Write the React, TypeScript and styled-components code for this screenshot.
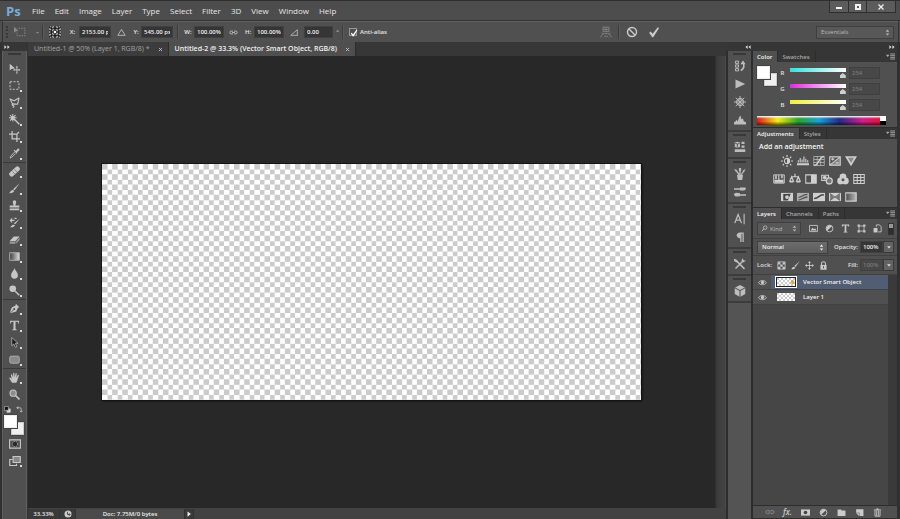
import React from "react";
import styled, { createGlobalStyle, css } from "styled-components";

const Global = createGlobalStyle`
  * { box-sizing: border-box; }
  body {
    margin: 0;
    background: #4f4f4f;
    color: #dedede;
    font: 7px/10px "Open Sans", "Noto Sans", sans-serif;
  }
  button, input, select { font: inherit; color: inherit; margin: 0; padding: 0; border: 0; background: none; border-radius: 0; }
  button { display: inline-flex; align-items: center; justify-content: center; }
  svg { display: block; flex: none; }
`;

/* ---------- icons ---------- */

const Svg = styled.svg<{ $size?: number }>`
  width: ${(p) => p.$size ?? 12}px;
  height: ${(p) => p.$size ?? 12}px;
  fill: currentColor;
  stroke: none;
`;

const line = { fill: "none", stroke: "currentColor" } as const;

const glyphs: Record<string, React.ReactNode> = {
  move: (
    <>
      <path d="M1 1v10l3-2.6L9 8z" />
      <path {...line} strokeWidth="1.3" d="M11.500 5.500v9M7 10h9" />
      <path d="M11.500 4l1.500 2h-3zM11.500 16l1.500-2h-3zM6 10l2-1.500v3zM16 10l-2-1.500v3z" />
    </>
  ),
  marquee: <path {...line} strokeWidth="1.4" strokeDasharray="3 2" d="M1.500 2.500h13v11h-13z" />,
  lasso: (
    <path {...line} strokeWidth="1.6" strokeLinejoin="round" d="M5 10L1.500 3l6 2.500L14.500 1.500l-2 9-6.500-.5c-2 0-2 2.500 0 2.500s1.500 2-.5 2.700" />
  ),
  wand: (
    <>
      <path {...line} strokeWidth="2" d="M7 7l8 8" />
      <circle cx="5.500" cy="5.500" r="2.600" />
      <path {...line} strokeWidth="1.5" d="M5.500 0v11M0 5.500h11M1.500 1.500l8 8M9.500 1.500l-8 8" />
    </>
  ),
  crop: <path {...line} strokeWidth="1.8" d="M4.500 0v11.500H16M0 4.500h11.500V16M14.500 1.500l-3 3" />,
  eyedropper: (
    <>
      <path d="M10 4.500l2.500-3.300c1.500-1.200 3.500.6 2.300 2.300L11.500 6l.8 1-1.200 1.200-4.300-4.400L8 2.700z" />
      <path {...line} strokeWidth="1.3" d="M8 6l-5.500 6-1 2.500 2.500-1L9.500 8" />
    </>
  ),
  heal: (
    <>
      <rect x="-1" y="4.500" width="18" height="7" rx="3" transform="rotate(-43 8 8)" />
      <path stroke="#777" strokeWidth="1.200" d="M5 8l3.500 3.500M8 5l3.500 3.500" />
    </>
  ),
  brush: (
    <>
      <path d="M15.500.5L8 10.500 6 9z" />
      <path d="M7.500 11c0 3-3.500 4.200-7.500 3.800 2-1 2-3.800 4.500-4.600z" />
    </>
  ),
  stamp: <path d="M5.500 3a2.500 2.500 0 015 0c0 1.500-1 2.500-1 5H15v3H1V8h5.500c0-2.500-1-3.500-1-5zM1 12.500h14V15H1z" />,
  history: (
    <>
      <path d="M15.500 2.500L9 10.500 7 9zM8.500 11.500c0 2.500-3 3.800-7 3.300 2-1 2-3 4.300-3.600z" />
      <path {...line} strokeWidth="1.700" d="M2 5h6M4.500 2L2 5l2.500 3M8 2h3" />
    </>
  ),
  eraser: (
    <>
      <path d="M7 3.500h8.500L9.500 10H1z" />
      <path fill="#999" d="M1 11h8.500v3H1zM10.500 10.500l5-5.500v3.500l-5 5.500z" />
    </>
  ),
  gradient: (
    <>
      <defs>
        <linearGradient id="toolGradient"><stop stopColor="#3c3c3c" /><stop offset="1" stopColor="#ddd" /></linearGradient>
      </defs>
      <path fill="url(#toolGradient)" stroke="#bbb" strokeWidth="1.200" d="M1 2.500h14v11H1z" />
    </>
  ),
  blur: <path d="M8 0c1 4 5 6.500 5 10.500a5 5 0 01-10 0C3 6.500 7 4 8 0z" />,
  dodge: (
    <>
      <circle cx="5.500" cy="5.500" r="4.800" />
      <path {...line} strokeWidth="2.200" d="M9 9l6 6" />
    </>
  ),
  pen: (
    <>
      <path d="M10 1l5 5-2 1-2.500 5.500L2 15l-.8-.8L4 6.500 9.500 3.500z" />
      <path stroke="#444" strokeWidth="1.200" d="M2 14.500l5-5" />
      <circle cx="7.600" cy="8.600" r="1.400" fill="#444" />
    </>
  ),
  type: <path d="M1.500 1h13v4h-1c-.3-2-1-2.500-4-2.500v10c0 1.200.5 1.500 2 1.500v1h-7v-1c1.500 0 2-.3 2-1.500v-10c-3 0-3.700.5-4 2.500h-1z" />,
  path: <path fill="#1e1e1e" stroke="#c8c8c8" strokeWidth="1" d="M4 .8v12l3-2.600 2.200 5 2.200-1-2.200-5h4z" />,
  shape: <rect x="1" y="3" width="14" height="10.500" rx="2.500" fill="#8a8a8a" stroke="#c0c0c0" />,
  hand: (
    <path d="M4.500 15.500L.5 9.300c-.4-1.300 1-1.600 1.700-.8L4 10 2.700 4.300c-.1-1.300 1.400-1.500 1.700-.4L6 8V2c0-1.300 1.700-1.300 1.800 0l.4 5.800L9.600 2c.3-1.200 1.900-.8 1.700.5l-.7 5.800 2-3.600c.7-1.100 2.100-.4 1.600.9L12.500 11c-.5 2-.8 3.500-2 4.500z" />
  ),
  zoom: (
    <>
      <circle cx="6" cy="6" r="4.500" fill="#8c8c8c" stroke="currentColor" strokeWidth="1.600" />
      <path {...line} strokeWidth="2.400" d="M9.500 9.500l5.700 5.700" />
    </>
  ),
  defaults: (
    <>
      <path fill="#ddd" d="M6 6h9v9H6z" />
      <path fill="#111" stroke="#bbb" strokeWidth="1.500" d="M1 1h9v9H1z" />
    </>
  ),
  swap: <path {...line} strokeWidth="2" d="M5 1L2 4l3 3M2 4h6c3 0 4 1 4 4v5M9 11l3 3 3-3" />,
  mask: (
    <>
      <path {...line} strokeWidth="1.500" d="M.8 2.500h14.400v11H.8z" />
      <circle cx="8" cy="8" r="3.500" fill="#2a2a2a" stroke="currentColor" strokeDasharray="1.500 1" />
    </>
  ),
  screen: (
    <>
      <path {...line} strokeWidth="1.600" d="M4.500 6H1v8h9v-2.500" />
      <path fill="#888" stroke="currentColor" strokeWidth="1.600" d="M5.500 2h9.500v8H5.500z" />
    </>
  ),
  transform: (
    <>
      <path d="M0 1v8l2.500-2L6 6.500z" />
      <path {...line} strokeWidth="1.300" strokeDasharray="2 1.500" d="M6 3h8.500v10H4V9" />
    </>
  ),
  triangle: <path {...line} strokeWidth="1.500" d="M8 2.500L14.500 13h-13z" />,
  link: (
    <path {...line} strokeWidth="1.600" d="M7 5.500H4a2.500 2.500 0 000 5h3M9 5.500h3a2.500 2.500 0 010 5H9M5.500 8h5" />
  ),
  angle: <path {...line} strokeWidth="1.400" d="M14 13H1.500L13 3v10" />,
  warp: (
    <path {...line} strokeWidth="1.200" d="M4 1.500h8v6H4zM8 1.500v6M4 4.500h8M1 15c1-4 4-5 7-5s6 1 7 5M4 11l-2-2M12 11l2-2M5 15c1-2 5-2 6 0" />
  ),
  cancel: (
    <>
      <circle cx="8" cy="8" r="6" {...line} strokeWidth="1.900" />
      <path {...line} strokeWidth="1.900" d="M3.700 3.700l8.600 8.600" />
    </>
  ),
  check: <path d="M1.500 9l2-1.700 2.700 3L13 1.500l1.800 1L7 15H5.700z" />,
  panelHistory: (
    <>
      <path {...line} strokeWidth="1.300" d="M2 1.500h4v3H2zM2 6.500h4v3H2zM2 11.500h4v3H2z" />
      <path {...line} strokeWidth="2" d="M9 14c4-2 5-5 3.500-9" />
      <path d="M8.500 5.500L12 .5l3.500 5z" />
    </>
  ),
  play: <path d="M2 2l13 6-13 6z" />,
  wheel: (
    <>
      <circle cx="8" cy="8" r="4.500" {...line} strokeWidth="1.500" />
      <path {...line} strokeWidth="1.300" d="M8 0v16M0 8h16M2.300 2.300l11.400 11.400M13.700 2.300L2.300 13.700" />
    </>
  ),
  histogram: <path d="M0 14v-3l2-1 1-2.500 2 2L7 4l1.500-2L10 7l2-1 1 3.500 3 1.500v3z" />,
  properties: (
    <>
      <path d="M1 2l3.500-1L8 2v6L4.500 9 1 8zM10 1h4v3h-4zM10 6h4v3h-4zM1 11h14v3.500H1z" />
      <path stroke="#444" fill="none" d="M1.500 3l3 1 3-1M4.500 4v4.500" />
    </>
  ),
  brushes: (
    <>
      <path d="M4 9h8l-1 7H5z" />
      <path {...line} strokeWidth="1.700" d="M7 9L2.500 3M8 9V1.500M9.500 9l4-5.500" />
      <path d="M0 1l4.500 2-2 2zM6.500 0h3v4h-3zM15.500 1l-4 2.500 2 1.500z" />
    </>
  ),
  presets: <path d="M0 3h8v-1h5c2 0 3 .5 3 1s-1 3-3 3H8V5H0zM16 11H8v-1.500L3 9c-2 0-3 2-3 2.700S1 14 3 14l5-.5V13h8z" />,
  character: (
    <>
      <path {...line} strokeWidth="1.700" d="M1 13.500L5.500 2 10 13.500M2.500 9.500h6" />
      <path {...line} strokeWidth="1.500" d="M13.500 1v14" />
    </>
  ),
  paragraph: <path d="M13 2v12.500h-1.700V3.500H10v11H8.300V9.500C2 9.500 2 2 8 2z" />,
  toolPresets: (
    <>
      <path {...line} strokeWidth="2" d="M3 3.500l11 11M13 3L2 14" />
      <path d="M0 1l3 1 2 2-1.500 2L0 4zM11 0l-1 4 3 2 3-3-2.500.5L12 2z" />
    </>
  ),
  cube: (
    <>
      <path d="M8 0l7 3.500v8.500L8 16l-7-4V3.500z" />
      <path fill="none" stroke="#494949" strokeWidth="1.300" d="M1 3.700L8 7.500l7-3.800M8 7.500V16" />
    </>
  ),
  brightness: (
    <>
      <circle cx="8" cy="8" r="3.500" {...line} strokeWidth="1.400" />
      <path d="M8 4.500a3.500 3.500 0 010 7z" />
      <path {...line} strokeWidth="1.500" d="M8 0v2.500M8 13.500V16M0 8h2.500M13.500 8H16M2.300 2.300L4 4M12 12l1.700 1.700M13.700 2.300L12 4M4 12l-1.700 1.700" />
    </>
  ),
  levels: <path d="M0 11h16v2.500H0zM1 10V7h1.500v3zM3.500 10V4H5v6zM6 10V6h1.500v4zM8.500 10V2H10v8zM11 10V5h1.500v5zM13.500 10V7H15v3z" />,
  curves: (
    <>
      <path {...line} strokeWidth="1.200" d="M1 2h14v12H1zM1 6h14M1 10h14M5.700 2v12M10.300 2v12" opacity=".7" />
      <path {...line} strokeWidth="1.800" d="M1 14c8 0 6-12 14-12" />
    </>
  ),
  exposure: (
    <>
      <path {...line} strokeWidth="1.500" d="M1 2.500h14v11H1z" />
      <path d="M1 13.500l14-11v11z" opacity=".4" />
      <path {...line} strokeWidth="1.400" d="M3 5.500h4M5 3.700v3.600M9 10.500h4M1 13.500l14-11" />
    </>
  ),
  vibrance: (
    <>
      <path d="M0 1.500h16L8 15z" />
      <path fill="#888" d="M4 3.500h8L8 10.500z" />
    </>
  ),
  hue: (
    <>
      <path {...line} strokeWidth="1.300" d="M1 2.500h14v11H1z" />
      <path d="M3 3h2v5H3zM7 3h1.500v6H7zM11 3h2v4h-2zM2 9h12v4H2z" />
    </>
  ),
  balance: (
    <path {...line} strokeWidth="1.600" d="M8 1v4M3 5h10M3.500 5L1 11h5zM12.500 5L10 11h5zM1 12h5M10 12h5" />
  ),
  blackWhite: (
    <>
      <path {...line} strokeWidth="1.400" d="M1 2.500h14v11H1z" />
      <path d="M8 2.500h7v11H8z" />
    </>
  ),
  photoFilter: (
    <>
      <path {...line} strokeWidth="1.500" d="M1 3h9v7H1z" />
      <circle cx="5" cy="6" r="2.500" />
      <circle cx="11" cy="10.500" r="4" fill="#777" stroke="currentColor" strokeWidth="1.700" />
    </>
  ),
  mixer: (
    <>
      <circle cx="8" cy="5" r="4.500" />
      <circle cx="4.800" cy="10.500" r="4.500" />
      <circle cx="11.200" cy="10.500" r="4.500" />
      <circle cx="8" cy="9" r="2" fill="#555" />
    </>
  ),
  lookup: <path {...line} strokeWidth="1.400" d="M1 2h14v12H1zM1 6h14M1 10h14M5.700 2v12M10.300 2v12" />,
  invert: (
    <>
      <path d="M0 2.500h16v11H0z" />
      <path fill="#444" d="M3 4l10-.5-4 9H3z" />
      <circle cx="8" cy="8" r="2.500" />
    </>
  ),
  posterize: (
    <>
      <path d="M0 2.500h16v11H0z" opacity=".75" />
      <path stroke="#555" fill="none" strokeWidth="1.700" d="M2 8.500c4 0 5-4 12-4M2 12c4 0 6-4 12-4" />
    </>
  ),
  threshold: (
    <>
      <path d="M0 2.500h16v11H0z" />
      <path fill="#444" d="M1.500 9c5 0 6-5 13-5v2c-6 0-7 5-13 5z" />
    </>
  ),
  selective: (
    <>
      <path d="M0 2.500h16v11H0z" />
      <path fill="#777" d="M1.500 3.500L7 8l-5.500 4.500zM14.500 3.500L9 8l5.500 4.500z" />
      <path stroke="#555" d="M1 3l14 10M15 3L1 13" />
    </>
  ),
  gradientMap: (
    <>
      <defs>
        <linearGradient id="mapGradient"><stop stopColor="#4a4a4a" /><stop offset="1" stopColor="#bbb" /></linearGradient>
      </defs>
      <path fill="url(#mapGradient)" stroke="#ccc" strokeWidth="1.400" d="M1 2.500h14v11H1z" />
    </>
  ),
  search: (
    <>
      <circle cx="9.500" cy="6" r="4" {...line} strokeWidth="2" />
      <path {...line} strokeWidth="2.200" d="M6.500 9L2 14" />
    </>
  ),
  pixel: (
    <>
      <path {...line} strokeWidth="1.500" d="M1 2.500h14v11H1z" />
      <path d="M3 11.500l3-5 3 3 2-2 2.500 4z" />
    </>
  ),
  adjust: (
    <>
      <circle cx="8" cy="8" r="6" {...line} strokeWidth="1.600" />
      <path d="M3.800 12.200A6 6 0 0112.200 3.800z" />
    </>
  ),
  vector: (
    <>
      <path {...line} strokeWidth="1.500" d="M4 3.500h8M4 12.500h8M3.500 4v8M12.500 4v8" />
      <path d="M1 1h4v4H1zM11 1h4v4h-4zM1 11h4v4H1zM11 11h4v4h-4z" />
    </>
  ),
  smart: (
    <>
      <path {...line} strokeWidth="1.500" d="M6 5V1.500h5.500L14.500 5v9H9" />
      <path d="M1 7h7v8H1z" />
    </>
  ),
  lockPixels: (
    <>
      <path {...line} strokeWidth="1.400" d="M1.500 1.500h13v13h-13z" />
      <path d="M2 2h4v4H2zM10 2h4v4h-4zM6 6h4v4H6zM2 10h4v4H2zM10 10h4v4h-4z" />
    </>
  ),
  lockMove: (
    <>
      <path {...line} strokeWidth="1.500" d="M8 2v12M2 8h12" />
      <path d="M8 0l2.500 3.500h-5zM8 16l2.500-3.500h-5zM0 8l3.500-2.500v5zM16 8l-3.500-2.500v5z" />
    </>
  ),
  lock: (
    <>
      <path {...line} strokeWidth="1.800" d="M4.500 8V4.500c0-4 7-4 7 0V8" />
      <path d="M2.500 7h11v8.500h-11z" />
      <path fill="#444" d="M7.200 9.500h1.600v3.500H7.200z" />
    </>
  ),
  eye: (
    <>
      <path {...line} strokeWidth="1.500" d="M.8 8.500C4 3 12 3 15.200 8.500 12 13 4 13 .8 8.500z" />
      <circle cx="8" cy="8" r="2.900" />
    </>
  ),
  maskAdd: (
    <>
      <path d="M0 2.500h16v11H0z" />
      <circle cx="8" cy="8" r="3.200" fill="#444" />
    </>
  ),
  folder: <path d="M1 2.500h6l1.500 2H15v9.500H1z" />,
  newLayer: (
    <>
      <path d="M2 2h13v12H8V8.500H2z" />
      <path d="M2 9.500h5V14z" />
    </>
  ),
  trash: (
    <>
      <path d="M6 1h4v1.500h4.500v2h-13v-2H6z" />
      <path {...line} strokeWidth="1.600" d="M3.500 5v9.500h9V5M6.500 5v9M9.500 5v9" />
    </>
  ),
  zoomStatus: (
    <>
      <circle cx="8" cy="8" r="7" fill="#ccc" />
      <path {...line} stroke="#444" strokeWidth="1.800" d="M7 3.500V9h5M10 6.500L12.500 9 10 11.500" />
    </>
  ),
  steppers: <path d="M8 1l4 5H4zM8 15l4-5H4z" />,
  down: <path d="M3 6h10l-5 6z" />,
  right: <path d="M4 1l9 7-9 7z" />,
  menu: (
    <>
      <path d="M0 5h6L3 9z" />
      <path {...line} strokeWidth="1.500" d="M7.500 3.500H16M7.500 6.500H16M7.500 9.500H16M7.500 12.500H16" />
    </>
  ),
  expand: <path d="M1 3l6 5-6 5zM9 3l6 5-6 5z" />,
  collapse: <path d="M7 3L1 8l6 5zM15 3L9 8l6 5z" />,
  close: <path {...line} strokeWidth="2.500" d="M3 3l10 10M13 3L3 13" />,
  refPoint: (
    <>
      <path fill="#222" d="M0 0h16v16H0z" />
      <path {...line} strokeDasharray="2 2" strokeWidth="1.500" d="M1 1h14v14H1zM5 1v14M11 1v14M1 5h14M1 11h14" />
      <path fill="#fff" d="M6.500 6.500h3v3h-3z" />
    </>
  ),
};

const Icon = ({ name, size }: { name: string; size?: number }) => (
  <Svg viewBox="0 0 16 16" $size={size} aria-hidden="true">{glyphs[name]}</Svg>
);

/* ---------- frame ---------- */

const Frame = styled.div`
  display: flex;
  flex-direction: column;
  min-height: 100vh;
  border-top: 1px solid #2f2f2f;
  background: #4f4f4f;
`;

const MenuBar = styled.header`
  display: flex;
  align-items: center;
  height: 20px;
  padding-left: 6px;
  border-bottom: 1px solid #333;
  background: #4d4d4d;
`;

const Logo = styled.div`
  width: 22px;
  color: #79acd9;
  font: 700 13px/18px "Open Sans", sans-serif;
`;

const Menus = styled.nav`
  display: flex;
  gap: 10px;
  padding-left: 4px;
  flex: 1;
  font-size: 8px;
`;

const MenuItem = styled.button`
  color: #e6e6e6;
  line-height: 18px;
`;

const WindowButtons = styled.div`
  display: flex;
  align-self: flex-start;
  height: 12px;
  margin-right: 4px;
  border: 1px solid #2e2e2e;
  border-top: 0;
  background: #5c5c5c;
`;

const WindowButton = styled.button<{ $wide?: boolean }>`
  width: ${(p) => (p.$wide ? 29 : 18)}px;
  color: #f2f2f2;
  & + & { border-left: 1px solid #2e2e2e; }
`;

const OptionsBar = styled.div`
  display: flex;
  align-items: center;
  height: 21px;
  border-top: 1px solid #606060;
  border-left: 1px solid #333;
  border-right: 1px solid #333;
  margin: 0 1px 0 2px;
  padding: 0 4px 0 3px;
  background: #505050;
  font-size: 6px;
  font-weight: 600;
`;

const Grip = styled.div`
  width: 2px;
  height: 12px;
  border-left: 2px dotted #383838;
`;

const Divider = styled.div`
  width: 2px;
  height: 14px;
  border-left: 1px solid #3c3c3c;
  border-right: 1px solid #5a5a5a;
`;

const Slot = styled.div<{ $w: number; $dim?: boolean }>`
  display: flex;
  align-items: center;
  justify-content: center;
  width: ${(p) => p.$w}px;
  color: ${(p) => (p.$dim ? "#8a8a8a" : "#c4c4c4")};
`;

const IconButton = styled.button<{ $w?: number; $dim?: boolean }>`
  width: ${(p) => p.$w ?? 16}px;
  height: 16px;
  color: ${(p) => (p.$dim ? "#858585" : "#cacaca")};
`;

const FieldLabel = styled.label<{ $w: number }>`
  width: ${(p) => p.$w}px;
  text-align: center;
  color: #e4e4e4;
`;

const NumberField = styled.input<{ $w: number; $off?: boolean }>`
  width: ${(p) => p.$w}px;
  height: 12px;
  padding: 0 2px;
  border: 1px solid #404040;
  background: ${(p) => (p.$off ? "#484848" : "#353535")};
  color: ${(p) => (p.$off ? "#777" : "#f0f0f0")};
  flex: none;
`;

const CheckLabel = styled.label`
  display: flex;
  align-items: center;
  gap: 3px;
  padding-left: 5px;
  color: #e4e4e4;
`;

const CheckMark = styled.span`
  position: relative;
  display: grid;
  place-items: center;
  width: 8px;
  height: 8px;
  border: 1px solid #999;
  color: #fff;
  input { position: absolute; inset: 0; appearance: none; width: 100%; height: 100%; }
`;

const Spacer = styled.div`
  flex: 1;
`;

const Commit = styled.div`
  display: flex;
  align-items: center;
  gap: 4px;
  margin-right: 152px;
`;

const Picker = styled.div<{ $w: number; $soft?: boolean; $lead?: boolean }>`
  position: relative;
  width: ${(p) => p.$w}px;
  height: 13px;
  background: ${(p) => (p.$soft ? "#585858" : "linear-gradient(#6c6c6c, #5e5e5e)")};
  border: 1px solid #3f3f3f;
  color: ${(p) => (p.$soft ? "#b8b8b8" : "#eee")};
  font-weight: ${(p) => (p.$soft ? 400 : 600)};
  select {
    display: block;
    width: 100%;
    height: 11px;
    padding: 0 4px 0 ${(p) => (p.$lead ? 12 : 4)}px;
    appearance: none;
    outline: none;
  }
  svg { position: absolute; top: 2px; pointer-events: none; }
  select + svg { right: 2px; }
  svg:first-child { left: 3px; }
`;

const Main = styled.main`
  display: flex;
  flex: 1;
  padding: 0 3px 0 2px;
  background: #303030;
`;

/* ---------- tool column ---------- */

const Column = styled.div<{ $w: number }>`
  display: flex;
  flex-direction: column;
  width: ${(p) => p.$w}px;
  flex: none;
`;

const ColumnHead = styled.div<{ $end?: boolean }>`
  display: flex;
  align-items: center;
  justify-content: ${(p) => (p.$end ? "flex-end" : "flex-start")};
  height: 9px;
  padding: 0 2px;
  background: #363636;
  color: #d8d8d8;
`;

const Toolbar = styled.div`
  display: flex;
  flex-direction: column;
  flex: 1;
  background: #505050;
  border-left: 1px solid #5e5e5e;
  border-right: 1px solid #606060;
`;

const Handle = styled.div<{ $h: number }>`
  height: ${(p) => p.$h}px;
  padding: 2px 5px;
  &::before { content: ""; display: block; height: 2px; background: #383838; }
`;

const ToolGroup = styled.div`
  display: flex;
  flex-direction: column;
  & + & { border-top: 1px solid #3a3a3a; }
`;

const Tool = styled.button<{ $more?: boolean }>`
  position: relative;
  height: 17px;
  color: #c6c6c6;
  ${(p) =>
    p.$more &&
    css`
      &::after { content: ""; position: absolute; right: 4px; bottom: 2px; width: 2px; height: 2px; background: #dadada; }
    `}
`;

const MiniRow = styled.div`
  display: flex;
  justify-content: space-between;
  align-items: center;
  height: 12px;
  padding: 0 3px 0 1px;
  color: #c6c6c6;
`;

const Swatches = styled.div`
  position: relative;
  width: 20px;
  height: 20px;
  margin: 0 1px;
`;

const Swatch = styled.button<{ $back?: boolean }>`
  position: absolute;
  ${(p) => (p.$back ? "right: 0; bottom: 0;" : "left: 0; top: 0; z-index: 1;")}
  width: 13px;
  height: 13px;
  background: ${(p) => (p.$back ? "#efefef" : "#fff")};
  border: 1px solid ${(p) => (p.$back ? "#ccc" : "#eee")};
  outline: 1px solid #444;
`;

/* ---------- document ---------- */

const Document = styled.section`
  display: flex;
  flex-direction: column;
  flex: 1;
  min-width: 0;
  border-left: 1px solid #333;
`;

const Tabs = styled.div`
  display: flex;
  height: 14px;
  background: #373737;
`;

const DocTab = styled.div<{ $on?: boolean }>`
  display: flex;
  align-items: center;
  gap: 8px;
  padding: 0 5px 0 6px;
  color: ${(p) => (p.$on ? "#f0f0f0" : "#a3a3a3")};
  background: ${(p) => (p.$on ? "#4f4f4f" : "#3c3c3c")};
  border-right: 1px solid #2c2c2c;
  white-space: nowrap;
  button:first-child { font-weight: ${(p) => (p.$on ? 600 : 500)}; }
  button:last-child { color: #d0d0d0; }
`;

const View = styled.div`
  display: flex;
  flex: 1;
`;

const Stage = styled.div`
  display: flex;
  flex: 1;
  align-items: center;
  justify-content: center;
  background: #282828;
`;

const checker = css`
  background-color: #fff;
  background-image: conic-gradient(#fff 25%, #cbcbcb 0 50%, #fff 0 75%, #cbcbcb 0);
`;

const Artboard = styled.div`
  width: 78.4%;
  aspect-ratio: 539 / 236;
  ${checker}
  background-size: calc(100% / 53) calc(100% / 23);
  box-shadow: 0 0 0 1px #141414, 1px 1px 2px #000;
`;

const ScrollTrack = styled.div`
  width: 11px;
  background: linear-gradient(90deg, #303030, #3d3d3d 30%, #434343);
  border-right: 1px solid #4b4b4b;
`;

const Status = styled.footer`
  display: flex;
  align-items: center;
  height: 11px;
  background: #424242;
  font-size: 6px;
  font-weight: 600;
  color: #ececec;
`;

const StatusCell = styled.div<{ $w: number; $center?: boolean }>`
  display: flex;
  align-items: center;
  justify-content: center;
  width: ${(p) => p.$w}px;
  height: 10px;
  background: ${(p) => (p.$center ? "#4a4a4a" : "#3a3a3a")};
  border-right: 1px solid #333;
`;

/* ---------- right docks ---------- */

const IconDock = styled.div`
  flex: 1;
  background: #545454;
  border: solid #2d2d2d;
  border-width: 0 2px;
`;

const DockGroup = styled.div`
  display: flex;
  flex-direction: column;
  padding-bottom: 1px;
  border-bottom: 2px solid #3c3c3c;
  background: #505050;
`;

const DockButton = styled.button`
  height: 18px;
  color: #bdbdbd;
`;

const Panel = styled.section<{ $grow?: boolean }>`
  display: flex;
  flex-direction: column;
  ${(p) => p.$grow && "flex: 1;"}
  background: #505050;
  border-bottom: 1px solid #2d2d2d;
`;

const PanelTabs = styled.div`
  display: flex;
  align-items: stretch;
  height: 11px;
  background: #363636;
  font-size: 6px;
`;

const PanelTab = styled.button<{ $on?: boolean }>`
  padding: 0 5px 0 4px;
  border-right: 1px solid #2c2c2c;
  color: ${(p) => (p.$on ? "#f2f2f2" : "#a8a8a8")};
  background: ${(p) => (p.$on ? "#505050" : "transparent")};
  font-weight: 600;
`;

const PanelMenu = styled.button`
  margin-left: auto;
  padding-right: 2px;
  color: #b0b0b0;
`;

const ColorBody = styled.div`
  display: grid;
  grid-template-columns: auto minmax(0, 1fr);
  gap: 5px 0;
  padding: 4px 11px 2px 3px;
`;

const Sliders = styled.div`
  display: grid;
  grid-template-columns: minmax(0, 1fr);
  gap: 3px;
`;

const SliderRow = styled.div`
  display: flex;
  align-items: center;
  height: 13px;
  font-size: 6px;
  font-weight: 600;
  padding-right: 6px;
`;

const Slider = styled.input<{ $from: string }>`
  appearance: none;
  && { margin: 0 3px; }
  flex: 1;
  width: 0;
  min-width: 0;
  height: 12px;
  background: linear-gradient(90deg, ${(p) => p.$from}, #fff) 0 1px / 100% 4px no-repeat;
  &::-webkit-slider-thumb {
    appearance: none;
    width: 6px;
    height: 5px;
    margin-top: 6px;
    background: #d0d0d0;
    clip-path: polygon(50% 0, 100% 50%, 100% 100%, 0 100%, 0 50%);
  }
`;

const Spectrum = styled.div`
  grid-column: 1 / -1;
  height: 9px;
  margin-left: 1px;
  display: flex;
  background: linear-gradient(#fff, transparent 30%, transparent 60%, #0009),
    linear-gradient(90deg, #e21818, #f4ec1c 16%, #28a52c 32%, #1ca0d8 48%, #262a86 64%, #d3208b 82%, #e3141c);
  &::after { content: ""; margin-left: auto; width: 6px; background: linear-gradient(#fff 50%, #000 0); }
`;

const AdjustBody = styled.div`
  padding: 3px 6px 1px;
  font-weight: 600;
  color: #f5f5f5;
`;

const AdjustRow = styled.div<{ $lead: number }>`
  display: flex;
  align-items: center;
  gap: 4px;
  height: 18px;
  padding-left: ${(p) => p.$lead}px;
  button { width: 12px; height: 13px; color: #cfcfcf; }
`;

const LayerBar = styled.div<{ $h: number }>`
  display: flex;
  align-items: center;
  height: ${(p) => p.$h}px;
  padding: 0 3px 0 4px;
  border-bottom: 1px solid #414141;
  font-size: 6px;
  font-weight: 600;
`;

const DropButton = styled.button`
  width: 11px;
  height: 12px;
  background: #636363;
  border: 1px solid #3a3a3a;
`;

const Toggle = styled.button`
  width: 6px;
  height: 12px;
  margin-left: auto;
  background: linear-gradient(#999 40%, #2e2e2e 0);
  border: 1px solid #333;
`;

const LayerList = styled.ul`
  flex: 1;
  margin: 0;
  padding: 0 9px 0 0;
  list-style: none;
  background: linear-gradient(90deg, #464646 calc(100% - 9px), #3a3a3a 0);
`;

const Layer = styled.li<{ $on?: boolean }>`
  display: flex;
  align-items: center;
  height: 15px;
  background: ${(p) => (p.$on ? "linear-gradient(90deg, #505050 18px, #515d72 0)" : "#505050")};
  border-bottom: 1px solid #414141;
  font-size: 6px;
  font-weight: 600;
  color: #f0f0f0;
`;

const Thumb = styled.div<{ $on?: boolean }>`
  position: relative;
  width: 22px;
  height: 12px;
  margin: 0 6px 0 4px;
  border: 1px solid ${(p) => (p.$on ? "#fff" : "transparent")};
  padding: 1px;
  background: ${(p) => (p.$on ? "#222" : "transparent")};
  &::before { content: ""; display: block; height: 8px; ${checker} background-size: 4px 4px; }
  ${(p) => p.$on && `&::after { content: ""; position: absolute; right: 2px; top: 3px; width: 3px; height: 4px; background: #e5a53c; border-radius: 2px; }`}
`;

const LayerFoot = styled.div`
  display: flex;
  align-items: center;
  gap: 1px;
  height: 13px;
  padding: 0 8px;
  background: #505050;
  border-top: 1px solid #2d2d2d;
  font: italic 600 8px/10px "Open Sans", sans-serif;
`;

const toolGroups: string[][] = [
  ["move", "marquee", "lasso", "wand", "crop", "eyedropper"],
  ["heal", "brush", "stamp", "history", "eraser", "gradient", "blur", "dodge"],
  ["pen", "type", "path", "shape"],
  ["hand", "zoom"],
];
const single = ["move", "zoom"];

const dockGroups: string[][] = [
  ["panelHistory", "play", "wheel", "histogram"],
  ["properties"],
  ["brushes", "presets"],
  ["character", "paragraph"],
  ["toolPresets"],
  ["cube"],
];

const channels = [
  ["R", "#35e0e0"],
  ["G", "#e02ae0"],
  ["B", "#f2ee3c"],
];

function ColorSwatches() {
  return (
    <Swatches>
      <Swatch aria-label="Foreground color" />
      <Swatch $back aria-label="Background color" />
    </Swatches>
  );
}

function Options() {
  return (
    <OptionsBar>
      <Grip />
      <Slot $w={24} $dim><Icon name="transform" /></Slot>
      <Slot $w={10} $dim><Icon name="down" size={5} /></Slot>
      <Divider />
      <IconButton $w={22} aria-label="Reference point"><Icon name="refPoint" size={12} /></IconButton>
      <FieldLabel $w={13} htmlFor="x">X:</FieldLabel>
      <NumberField $w={32} id="x" defaultValue="2153.00 px" />
      <Slot $w={20}><Icon name="triangle" size={9} /></Slot>
      <FieldLabel $w={10} htmlFor="y">Y:</FieldLabel>
      <NumberField $w={32} id="y" defaultValue="545.00 px" />
      <Slot $w={9}><Divider /></Slot>
      <FieldLabel $w={12} htmlFor="w">W:</FieldLabel>
      <NumberField $w={30} id="w" defaultValue="100.00%" />
      <Slot $w={18}><Icon name="link" size={9} /></Slot>
      <FieldLabel $w={12} htmlFor="h">H:</FieldLabel>
      <NumberField $w={30} id="h" defaultValue="100.00%" />
      <Slot $w={20}><Icon name="angle" size={9} /></Slot>
      <NumberField $w={29} aria-label="Rotation" defaultValue="0.00" />
      <Slot $w={9}>°</Slot>
      <Divider />
      <CheckLabel>
        <CheckMark><input type="checkbox" defaultChecked /><Icon name="check" size={8} /></CheckMark>
        Anti-alias
      </CheckLabel>
      <Spacer />
      <Commit>
        <IconButton $dim aria-label="Warp"><Icon name="warp" /></IconButton>
        <Divider />
        <IconButton aria-label="Cancel transform"><Icon name="cancel" /></IconButton>
        <IconButton $w={20} aria-label="Commit transform"><Icon name="check" /></IconButton>
      </Commit>
      <Picker $w={78} $soft>
        <select aria-label="Workspace"><option>Essentials</option></select>
        <Icon name="steppers" size={7} />
      </Picker>
    </OptionsBar>
  );
}

function Tools() {
  return (
    <Column $w={25}>
      <ColumnHead><Icon name="expand" size={6} /></ColumnHead>
      <Toolbar>
        <Handle $h={9} />
        {toolGroups.map((g) => (
          <ToolGroup key={g[0]}>
            {g.map((t) => (
              <Tool key={t} $more={!single.includes(t)} aria-label={t}><Icon name={t} size={11} /></Tool>
            ))}
          </ToolGroup>
        ))}
        <MiniRow><Icon name="defaults" size={7} /><Icon name="swap" size={7} /></MiniRow>
        <ColorSwatches />
        <Tool aria-label="Quick mask"><Icon name="mask" /></Tool>
        <Tool $more aria-label="Screen mode"><Icon name="screen" /></Tool>
      </Toolbar>
    </Column>
  );
}

export default function App() {
  return (
    <>
      <Global />
      <Frame>
        <MenuBar>
          <Logo>Ps</Logo>
          <Menus>
            {["File", "Edit", "Image", "Layer", "Type", "Select", "Filter", "3D", "View", "Window", "Help"].map((m) => (
              <MenuItem key={m}>{m}</MenuItem>
            ))}
          </Menus>
          <WindowButtons>
            <WindowButton aria-label="Minimize"><Svg viewBox="0 0 8 8" $size={8}><path d="M1 4h6v2H1z" /></Svg></WindowButton>
            <WindowButton aria-label="Maximize"><Svg viewBox="0 0 8 8" $size={8}><path fillRule="evenodd" d="M1 1h6v6H1zM3 3v2h2V3z" /></Svg></WindowButton>
            <WindowButton $wide aria-label="Close"><Icon name="close" size={8} /></WindowButton>
          </WindowButtons>
        </MenuBar>
        <Options />
        <Main>
          <Tools />
          <Document>
            <Tabs>
              <DocTab><button>Untitled-1 @ 50% (Layer 1, RGB/8) *</button><button aria-label="Close tab"><Icon name="close" size={5} /></button></DocTab>
              <DocTab $on><button>Untitled-2 @ 33.3% (Vector Smart Object, RGB/8)</button><button aria-label="Close tab"><Icon name="close" size={5} /></button></DocTab>
            </Tabs>
            <View>
              <Stage><Artboard /></Stage>
              <ScrollTrack />
            </View>
            <Status>
              <StatusCell $w={32}>33.33%</StatusCell>
              <StatusCell $w={16}><Icon name="zoomStatus" size={8} /></StatusCell>
              <StatusCell $w={109} $center>Doc: 7.75M/0 bytes</StatusCell>
              <StatusCell $w={9}><Icon name="right" size={6} /></StatusCell>
            </Status>
          </Document>
          <Column $w={27}>
            <ColumnHead $end><Icon name="collapse" size={6} /></ColumnHead>
            <IconDock>
              {dockGroups.map((g) => (
                <DockGroup key={g[0]}>
                  <Handle $h={6} />
                  {g.map((d) => <DockButton key={d} aria-label={d}><Icon name={d} size={12} /></DockButton>)}
                </DockGroup>
              ))}
            </IconDock>
          </Column>
          <Column $w={144}>
            <ColumnHead $end><Icon name="expand" size={6} /></ColumnHead>
            <Panel>
              <PanelTabs>
                <PanelTab $on>Color</PanelTab><PanelTab>Swatches</PanelTab>
                <PanelMenu aria-label="Panel menu"><Icon name="menu" size={9} /></PanelMenu>
              </PanelTabs>
              <ColorBody>
                <ColorSwatches />
                <Sliders>
                  {channels.map(([c, from]) => (
                    <SliderRow key={c}>
                      <FieldLabel $w={9} htmlFor={c}>{c}</FieldLabel>
                      <Slider id={c} type="range" max={255} defaultValue={254} $from={from} />
                      <NumberField $w={31} $off aria-label={c + " value"} defaultValue="254" />
                    </SliderRow>
                  ))}
                </Sliders>
                <Spectrum />
              </ColorBody>
            </Panel>
            <Panel>
              <PanelTabs>
                <PanelTab $on>Adjustments</PanelTab><PanelTab>Styles</PanelTab>
                <PanelMenu aria-label="Panel menu"><Icon name="menu" size={9} /></PanelMenu>
              </PanelTabs>
              <AdjustBody>
                Add an adjustment
                {[
                  ["brightness", "levels", "curves", "exposure", "vibrance"],
                  ["hue", "balance", "blackWhite", "photoFilter", "mixer", "lookup"],
                  ["invert", "posterize", "threshold", "selective", "gradientMap"],
                ].map((r) => (
                  <AdjustRow key={r[0]} $lead={r.length === 5 ? 22 : 14}>
                    {r.map((a) => <button key={a} aria-label={a}><Icon name={a} size={12} /></button>)}
                  </AdjustRow>
                ))}
              </AdjustBody>
            </Panel>
            <Panel $grow>
              <PanelTabs>
                <PanelTab $on>Layers</PanelTab><PanelTab>Channels</PanelTab><PanelTab>Paths</PanelTab>
                <PanelMenu aria-label="Panel menu"><Icon name="menu" size={9} /></PanelMenu>
              </PanelTabs>
              <LayerBar $h={20}>
                <Picker $w={44} $soft $lead>
                  <Icon name="search" size={7} />
                  <select aria-label="Filter kind"><option>Kind</option></select>
                  <Icon name="steppers" size={7} />
                </Picker>
                <Slot $w={4} />
                {["pixel", "adjust", "type", "vector", "smart"].map((f) => (
                  <IconButton key={f} $w={16} aria-label={f}><Icon name={f} size={9} /></IconButton>
                ))}
                <Toggle aria-label="Toggle filtering" />
              </LayerBar>
              <LayerBar $h={17}>
                <Picker $w={71}>
                  <select aria-label="Blend mode"><option>Normal</option></select>
                  <Icon name="steppers" size={7} />
                </Picker>
                <Spacer />
                <FieldLabel $w={28} htmlFor="opacity">Opacity:</FieldLabel>
                <NumberField $w={23} id="opacity" defaultValue="100%" />
                <DropButton aria-label="Opacity slider"><Icon name="down" size={6} /></DropButton>
              </LayerBar>
              <LayerBar $h={19}>
                <span>Lock:</span>
                <Slot $w={3} />
                {["lockPixels", "brush", "lockMove", "lock"].map((f) => (
                  <IconButton key={f} $w={14} aria-label={f}><Icon name={f} size={9} /></IconButton>
                ))}
                <Spacer />
                <FieldLabel $w={14} htmlFor="fill">Fill:</FieldLabel>
                <NumberField $w={23} $off id="fill" defaultValue="100%" />
                <DropButton aria-label="Fill slider"><Icon name="down" size={6} /></DropButton>
              </LayerBar>
              <LayerList>
                {["Vector Smart Object", "Layer 1"].map((n, i) => (
                  <Layer key={n} $on={i === 0}>
                    <IconButton $w={18} aria-label={"Hide " + n}><Icon name="eye" size={9} /></IconButton>
                    <Thumb $on={i === 0} />
                    {n}
                  </Layer>
                ))}
              </LayerList>
              <LayerFoot>
                <IconButton $w={17} $dim aria-label="Link layers"><Icon name="link" size={10} /></IconButton>
                <IconButton $w={17} aria-label="Layer style">fx.</IconButton>
                {["maskAdd", "adjust", "folder", "newLayer", "trash"].map((f) => (
                  <IconButton key={f} $w={17} aria-label={f}><Icon name={f} size={9} /></IconButton>
                ))}
              </LayerFoot>
            </Panel>
          </Column>
        </Main>
      </Frame>
    </>
  );
}
